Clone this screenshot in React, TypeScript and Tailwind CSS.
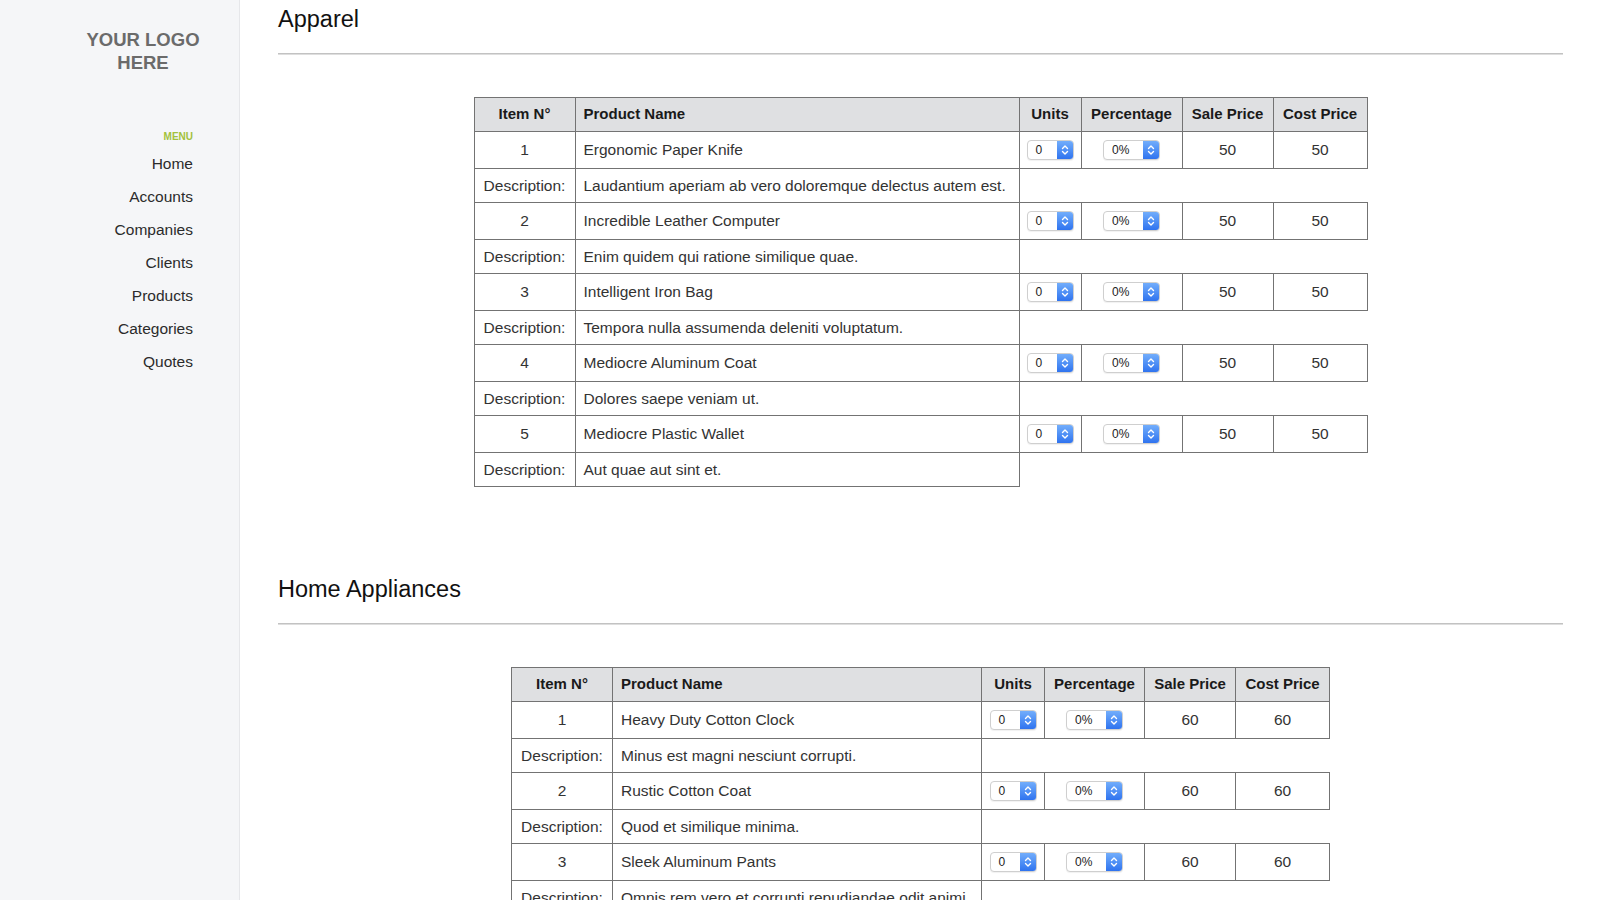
import React from "react";

type Item = { name: string; desc: string };

const apparel: Item[] = [
  { name: "Ergonomic Paper Knife", desc: "Laudantium aperiam ab vero doloremque delectus autem est." },
  { name: "Incredible Leather Computer", desc: "Enim quidem qui ratione similique quae." },
  { name: "Intelligent Iron Bag", desc: "Tempora nulla assumenda deleniti voluptatum." },
  { name: "Mediocre Aluminum Coat", desc: "Dolores saepe veniam ut." },
  { name: "Mediocre Plastic Wallet", desc: "Aut quae aut sint et." },
];

const appliances: Item[] = [
  { name: "Heavy Duty Cotton Clock", desc: "Minus est magni nesciunt corrupti." },
  { name: "Rustic Cotton Coat", desc: "Quod et similique minima." },
  { name: "Sleek Aluminum Pants", desc: "Omnis rem vero et corrupti repudiandae odit animi." },
];

const menu = ["Home", "Accounts", "Companies", "Clients", "Products", "Categories", "Quotes"];

function Stepper() {
  return (
    <span className="flex w-[16px] items-center justify-center bg-linear-to-b from-[#72adfb] to-[#2f73ef]">
      <svg width="8" height="12" viewBox="0 0 8 12" fill="none">
        <path d="M1.5 4.5 L4 2 L6.5 4.5" stroke="white" strokeWidth="1.4" strokeLinecap="round" strokeLinejoin="round" />
        <path d="M1.5 7.5 L4 10 L6.5 7.5" stroke="white" strokeWidth="1.4" strokeLinecap="round" strokeLinejoin="round" />
      </svg>
    </span>
  );
}

function SelectBox({ value, wide }: { value: string; wide?: boolean }) {
  return (
    <div
      className={
        (wide ? "w-[57px] " : "w-[47px] ") +
        "mx-auto flex h-[20px] overflow-hidden rounded-[4px] border border-[#cfcfcf] bg-white shadow-[0_1px_1px_rgba(0,0,0,0.06)]"
      }
    >
      <span className="flex-1 pl-[8px] text-left text-[12px] leading-[18px] text-[#222]">{value}</span>
      <Stepper />
    </div>
  );
}

function ProductTable({
  items,
  price,
  widths,
}: {
  items: Item[];
  price: string;
  widths: number[];
}) {
  const total = widths.reduce((a, b) => a + b, 0);
  const cell = "border border-[#737373]";
  return (
    <table
      className="mx-auto table-fixed border-collapse text-[15.5px] text-[#333]"
      style={{ width: total }}
    >
      <colgroup>
        {widths.map((w, i) => (
          <col key={i} style={{ width: w }} />
        ))}
      </colgroup>
      <thead>
        <tr className="h-[34px] bg-[#dfe0e2] text-[15px] font-bold text-[#1a1a1a]">
          <th className={cell + " text-center"}>Item N°</th>
          <th className={cell + " pl-[8px] text-left"}>Product Name</th>
          <th className={cell + " text-center"}>Units</th>
          <th className={cell + " text-center"}>Percentage</th>
          <th className={cell + " text-center"}>Sale Price</th>
          <th className={cell + " text-center"}>Cost Price</th>
        </tr>
      </thead>
      <tbody>
        {items.map((it, i) => (
          <React.Fragment key={i}>
            <tr className="h-[37px]">
              <td className={cell + " text-center"}>{i + 1}</td>
              <td className={cell + " pl-[8px]"}>{it.name}</td>
              <td className={cell + " text-center"}>
                <SelectBox value="0" />
              </td>
              <td className={cell + " text-center"}>
                <SelectBox value="0%" wide />
              </td>
              <td className={cell + " text-center"}>{price}</td>
              <td className={cell + " text-center"}>{price}</td>
            </tr>
            <tr className="h-[34px]">
              <td className={cell + " text-center"}>Description:</td>
              <td className={cell + " pl-[8px]"}>{it.desc}</td>
              <td colSpan={4}></td>
            </tr>
          </React.Fragment>
        ))}
      </tbody>
    </table>
  );
}

function Section({
  title,
  children,
  first,
}: {
  title: string;
  children: React.ReactNode;
  first?: boolean;
}) {
  return (
    <section className={first ? "" : "mt-[86px]"}>
      <h2 className="text-[23.5px] leading-[32px] font-normal text-[#111]">{title}</h2>
      <div className="mt-[18px] h-[2px] border-t border-b border-t-[#c2c2c2] border-b-[#dedede]" />
      <div className="mt-[42px]">{children}</div>
    </section>
  );
}

export default function App() {
  return (
    <div className="flex min-h-screen bg-white font-['Liberation_Sans',Arial,sans-serif]">
      <aside className="w-[240px] shrink-0 border-r border-[#e6e7ea] bg-[#f5f6f8]">
        <div className="pt-[28px] pl-[47px] text-center text-[18.5px] leading-[23px] font-bold text-[#6b6b6b]">
          YOUR LOGO
          <br />
          HERE
        </div>
        <nav className="mt-[56px] pr-[46px] text-right">
          <div className="text-[10px] leading-[14px] font-bold text-[#a2c13c]">MENU</div>
          <ul className="mt-[10px]">
            {menu.map((m) => (
              <li key={m} className="h-[33px] text-[15.5px] leading-[20px] text-[#2b2b2b]">
                {m}
              </li>
            ))}
          </ul>
        </nav>
      </aside>
      <main className="flex-1 pt-[3px] pr-[37px] pl-[38px] pb-[40px]">
        <Section title="Apparel" first>
          <ProductTable items={apparel} price="50" widths={[101, 444, 62, 101, 91, 94]} />
        </Section>
        <Section title="Home Appliances">
          <ProductTable items={appliances} price="60" widths={[101, 369, 63, 100, 91, 94]} />
        </Section>
      </main>
    </div>
  );
}
